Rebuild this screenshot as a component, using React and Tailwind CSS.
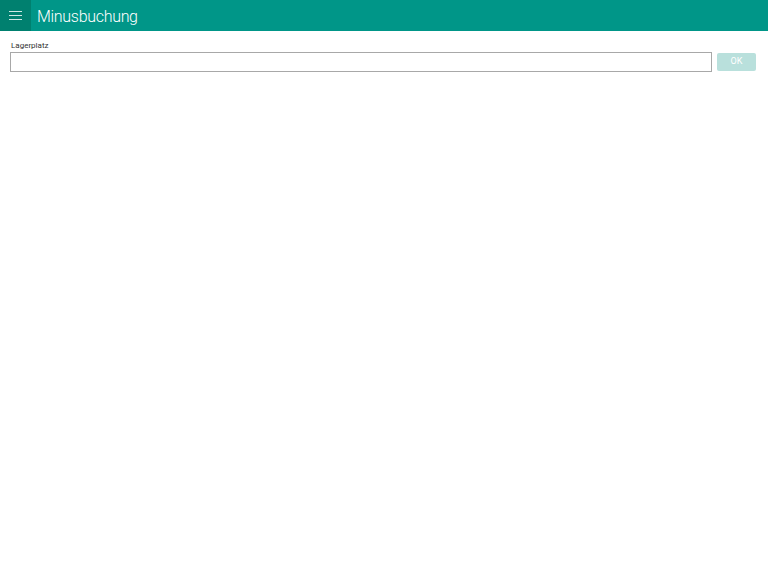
export default function App() {
  return (
    <div className="w-[768px] h-[585px] bg-white" style={{ fontFamily: "Roboto, 'Noto Sans', sans-serif" }}>
      <header className="h-[31px] bg-[#009688] flex items-center">
        <button className="w-[31px] h-[31px] bg-[#00806f] flex flex-col items-center justify-center gap-[3px]">
          <span className="block w-[13px] h-px bg-[#cfe9e5]" />
          <span className="block w-[13px] h-px bg-[#cfe9e5]" />
          <span className="block w-[13px] h-px bg-[#cfe9e5]" />
        </button>
        <h1 className="ml-[6px] text-[16px] font-light tracking-[-0.3px] text-white leading-none pt-[2px]">Minusbuchung</h1>
      </header>
      <main className="px-[10px] pt-[9px]">
        <label className="block text-[8px] text-[#333] leading-[11px] ml-px">Lagerplatz</label>
        <div className="flex items-center gap-[5px] mt-px">
          <input className="w-[702px] h-[20px] border border-[#a8a8a8] outline-none px-1 text-xs" />
          <button className="w-[39px] h-[18px] rounded-[2px] bg-[#b9e0dc] text-white text-[9px]">OK</button>
        </div>
      </main>
    </div>
  );
}
